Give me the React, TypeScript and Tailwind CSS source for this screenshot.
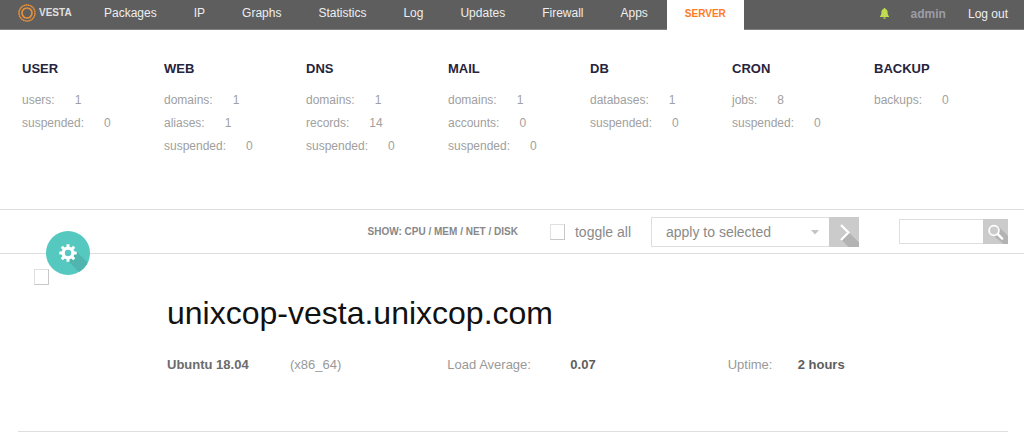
import { useState } from 'react';
import clsx from 'clsx';

interface StatGroup {
  title: string;
  rows: [string, number][];
}

const navItems = ['Packages', 'IP', 'Graphs', 'Statistics', 'Log', 'Updates', 'Firewall', 'Apps'];

const stats: StatGroup[] = [
  { title: 'USER', rows: [['users', 1], ['suspended', 0]] },
  { title: 'WEB', rows: [['domains', 1], ['aliases', 1], ['suspended', 0]] },
  { title: 'DNS', rows: [['domains', 1], ['records', 14], ['suspended', 0]] },
  { title: 'MAIL', rows: [['domains', 1], ['accounts', 0], ['suspended', 0]] },
  { title: 'DB', rows: [['databases', 1], ['suspended', 0]] },
  { title: 'CRON', rows: [['jobs', 8], ['suspended', 0]] },
  { title: 'BACKUP', rows: [['backups', 0]] },
];

const graphLinks = ['CPU', 'MEM', 'NET', 'DISK'];

const checkboxClass =
  'block h-4 w-[15px] shrink-0 appearance-none border border-[#e0e0e0] border-r-[#c8c8c8] border-b-[#c8c8c8] bg-white checked:bg-[#55c9c0]';

function Logo() {
  return (
    <a href="#" aria-label="Vesta" className="flex w-[68px] items-center gap-[3px] text-[#e0e0e0]">
      <svg width="18" height="18" viewBox="0 0 18 18" fill="none" stroke="#e8903a">
        <circle cx="9" cy="9" r="8" strokeWidth="1.5" strokeDasharray="1.6 .3" />
        <circle cx="9" cy="9" r="5" strokeWidth="1.7" />
      </svg>
      <span className="text-[10px] font-bold">VESTA</span>
    </a>
  );
}

function BellIcon() {
  return (
    <svg width="9" height="11" viewBox="0 0 9 11" fill="#bfdd4e">
      <path d="M4.5 0c.6 0 1 .4 1 .9C7 1.300 7.600 2.500 7.600 4c0 2.300.4 3.300 1.400 4.300V9H0v-.7C1 7.300 1.400 6.300 1.400 4c0-1.500.7-2.700 2.100-3.100 0-.5.4-.9 1-.9zM3.200 9.500h2.600c0 .8-.6 1.400-1.300 1.400S3.200 10.300 3.200 9.500z" />
    </svg>
  );
}

function TopBar() {
  return (
    <header className="flex h-[30px] items-stretch justify-between border-b border-[#858080] bg-[#5e5e5e] pr-4 pl-[18px] text-xs text-[#eee]">
      <div className="flex">
        <div className="flex items-center pb-1">
          <Logo />
        </div>
        <nav className="-mb-px flex gap-px">
          {navItems.map((item) => (
            <a key={item} href="#" className="flex items-center px-[18px] pb-1 hover:text-white">
              {item}
            </a>
          ))}
          <a
            href="#"
            aria-current="page"
            className="flex items-center bg-white px-[18px] pb-[2px] text-[10px] font-bold text-[#ff7a22]"
          >
            SERVER
          </a>
        </nav>
      </div>
      <div className="flex items-center gap-[22px] pb-[2px]">
        <button type="button" aria-label="Notifications">
          <BellIcon />
        </button>
        <a href="#" className="font-bold text-[#9d9da6]">
          admin
        </a>
        <a href="#">Log out</a>
      </div>
    </header>
  );
}

function StatsPanel() {
  return (
    <section className="grid grid-cols-7 pt-[29px] pr-2 pb-[51px] pl-[22px]">
      {stats.map((group) => (
        <div key={group.title}>
          <h2 className="text-[13px] leading-5 font-bold text-[#26243c]">{group.title}</h2>
          <dl className="mt-[10px] text-xs leading-[23px] text-[#a0a0a0]">
            {group.rows.map(([label, value]) => (
              <div key={label} className="flex gap-5">
                <dt>{label}:</dt>
                <dd>{value}</dd>
              </div>
            ))}
          </dl>
        </div>
      ))}
    </section>
  );
}

function GearButton() {
  return (
    <button
      type="button"
      aria-label="Configure server"
      className="absolute -bottom-[22px] left-[46px] size-11 overflow-hidden rounded-full bg-[#55c9c0]"
    >
      <svg width="44" height="44" viewBox="0 0 44 44">
        <path d="M30 20 L44 34 V44 H36 L22 30 Z" fill="#4fb5ae" />
        <circle cx="22" cy="22" r="4.800" fill="none" stroke="#fff" strokeWidth="3.200" />
        <g stroke="#fff" strokeWidth="3">
          <path d="M22 13.300v3.200M22 27.500v3.200M13.300 22h3.200M27.500 22h3.200" />
          <path d="M15.800 15.800l2.300 2.300M25.900 25.900l2.300 2.300M15.800 28.200l2.300-2.300M25.900 18.100l2.300-2.300" />
        </g>
      </svg>
    </button>
  );
}

interface ToolbarProps {
  checked: boolean;
  onToggle: (checked: boolean) => void;
}

function Toolbar({ checked, onToggle }: ToolbarProps) {
  return (
    <div className="relative flex h-[45px] items-center justify-end border-y border-[#dedede] pr-4">
      <GearButton />
      <div className="mr-8 text-[10px] font-bold text-[#888]">
        SHOW:{' '}
        {graphLinks.map((link, i) => (
          <span key={link}>
            {i > 0 && ' / '}
            <a href="#">{link}</a>
          </span>
        ))}
      </div>
      <label className="mr-5 flex items-center gap-[10px] text-sm text-[#8a8a8a]">
        <input
          type="checkbox"
          checked={checked}
          onChange={(e) => onToggle(e.target.checked)}
          className={checkboxClass}
        />
        toggle all
      </label>
      <form className="mr-10 flex" onSubmit={(e) => e.preventDefault()}>
        <div className="relative">
          <select
            aria-label="Action for selected servers"
            className="h-[30px] w-[178px] appearance-none border border-r-0 border-[#dedede] bg-white pr-7 pl-[14px] text-sm text-[#8a8a8a]"
          >
            <option>apply to selected</option>
            <option>restart</option>
          </select>
          <svg
            width="8"
            height="5"
            viewBox="0 0 8 5"
            className="pointer-events-none absolute top-[13px] right-[10px]"
          >
            <path d="M0 0h8L4 4.500z" fill="#c4c4c4" />
          </svg>
        </div>
        <button type="submit" aria-label="Apply" className="size-[30px] bg-[#cbcbcb]">
          <svg width="30" height="30" viewBox="0 0 30 30">
            <path d="M20 15.500 L30 25.500 V30 H19.500 L12.500 23 Z" fill="#b3b3b3" />
            <path d="M12 8l7.500 7.500-7.500 7.500" fill="none" stroke="#fff" strokeWidth="2.200" />
          </svg>
        </button>
      </form>
      <form role="search" className="flex" onSubmit={(e) => e.preventDefault()}>
        <input
          type="search"
          aria-label="Search"
          className="h-[25px] w-[84px] border border-r-0 border-[#dedede] bg-white px-2 text-xs text-[#777]"
        />
        <button type="submit" aria-label="Search" className="size-[25px] bg-[#cbcbcb]">
          <svg width="25" height="25" viewBox="0 0 25 25">
            <path d="M15.500 7.500 L25 17 V25 H20.500 L8 14.500 Z" fill="#b3b3b3" />
            <circle cx="11" cy="11.500" r="4.900" fill="#cbcbcb" stroke="#fff" strokeWidth="1.700" />
            <path d="M14.800 15.200l4.400 4.400" stroke="#fff" strokeWidth="2.400" strokeLinecap="round" />
          </svg>
        </button>
      </form>
    </div>
  );
}

interface MetricProps {
  label: string;
  value: string;
  strongLabel?: boolean;
  narrow?: boolean;
}

function Metric({ label, value, strongLabel, narrow }: MetricProps) {
  return (
    <div className="flex">
      <dt
        className={clsx(
          'shrink-0',
          narrow ? 'w-[70px]' : 'w-[123px]',
          strongLabel ? 'font-bold text-[#6b6b6b]' : 'text-[#999]'
        )}
      >
        {label}
      </dt>
      <dd className={strongLabel ? 'text-[#999]' : 'font-bold text-[#5e5e5e]'}>{value}</dd>
    </div>
  );
}

function ServerRow({ checked, onToggle }: ToolbarProps) {
  return (
    <article className="mr-4 ml-[18px] flex border-b border-[#dedede] pt-[15px] pb-14 pl-4">
      <input
        type="checkbox"
        aria-label="Select unixcop-vesta.unixcop.com"
        checked={checked}
        onChange={(e) => onToggle(e.target.checked)}
        className={checkboxClass}
      />
      <div className="ml-[118px] flex-1 pt-6">
        <h1 className="text-[32px] leading-10 text-[#111]">unixcop-vesta.unixcop.com</h1>
        <dl className="mt-[22px] grid grid-cols-3 text-[13px] leading-5">
          <Metric label="Ubuntu 18.04" value="(x86_64)" strongLabel />
          <Metric label="Load Average:" value="0.07" />
          <Metric label="Uptime:" value="2 hours" narrow />
        </dl>
      </div>
    </article>
  );
}

export default function App() {
  const [selected, setSelected] = useState(false);

  return (
    <div className="min-h-screen bg-white font-['Liberation_Sans',Arial,sans-serif]">
      <TopBar />
      <main>
        <StatsPanel />
        <Toolbar checked={selected} onToggle={setSelected} />
        <ServerRow checked={selected} onToggle={setSelected} />
      </main>
    </div>
  );
}
